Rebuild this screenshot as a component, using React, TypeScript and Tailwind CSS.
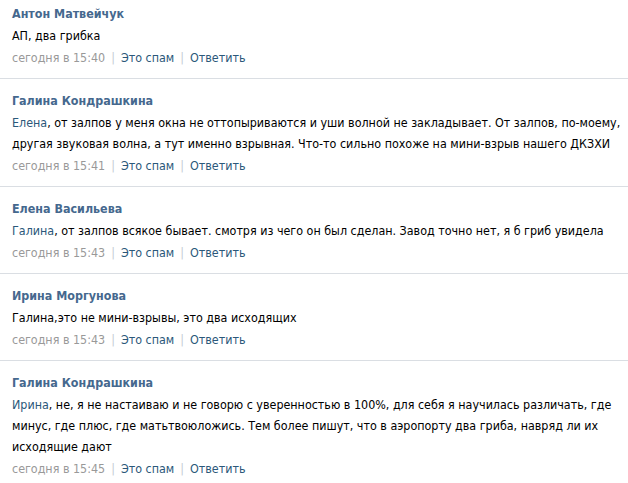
import React from "react";

type Comment = {
  author: string;
  reply?: string;
  text: string;
  time: string;
};

const comments: Comment[] = [
  { author: "Антон Матвейчук", text: "АП, два грибка", time: "15:40" },
  {
    author: "Галина Кондрашкина",
    reply: "Елена",
    text: ", от залпов у меня окна не оттопыриваются и уши волной не закладывает. От залпов, по-моему, другая звуковая волна, а тут именно взрывная. Что-то сильно похоже на мини-взрыв нашего ДКЗХИ",
    time: "15:41",
  },
  {
    author: "Елена Васильева",
    reply: "Галина",
    text: ", от залпов всякое бывает. смотря из чего он был сделан. Завод точно нет, я б гриб увидела",
    time: "15:43",
  },
  { author: "Ирина Моргунова", text: "Галина,это не мини-взрывы, это два исходящих", time: "15:43" },
  {
    author: "Галина Кондрашкина",
    reply: "Ирина",
    text: ", не, я не настаиваю и не говорю с уверенностью в 100%, для себя я научилась различать, где минус, где плюс, где матьтвоюложись. Тем более пишут, что в аэропорту два гриба, навряд ли их исходящие дают",
    time: "15:45",
  },
];

const CommentRow = ({ c }: { c: Comment }) => (
  <div className="border-t border-[#dadee3] pl-3 pr-0 pt-[11px] pb-[10px]">
    <div className="mb-px text-[12.4px] font-bold leading-[21px] text-[#45688e]">{c.author}</div>
    <div className="text-[12.4px] leading-[21px] text-black">
      {c.reply && <span className="text-[#2b587a]">{c.reply}</span>}
      {c.text}
    </div>
    <div className="mt-px flex items-center text-[12.4px] leading-[21px]">
      <span className="text-[#999999]">сегодня в {c.time}</span>
      <span className="mx-[6px] text-[#c5ccd4]">|</span>
      <span className="text-[#2b587a]">Это спам</span>
      <span className="mx-[6px] text-[#c5ccd4]">|</span>
      <span className="text-[#2b587a]">Ответить</span>
    </div>
  </div>
);

export default function App() {
  return (
    <div
      className="h-[483px] w-[628px] overflow-hidden bg-white"
      style={{ fontFamily: 'Tahoma, "DejaVu Sans Condensed", "DejaVu Sans", sans-serif' }}
    >
      <div className="-mt-[9px]">
        {comments.map((c, i) => (
          <CommentRow key={i} c={c} />
        ))}
      </div>
    </div>
  );
}
